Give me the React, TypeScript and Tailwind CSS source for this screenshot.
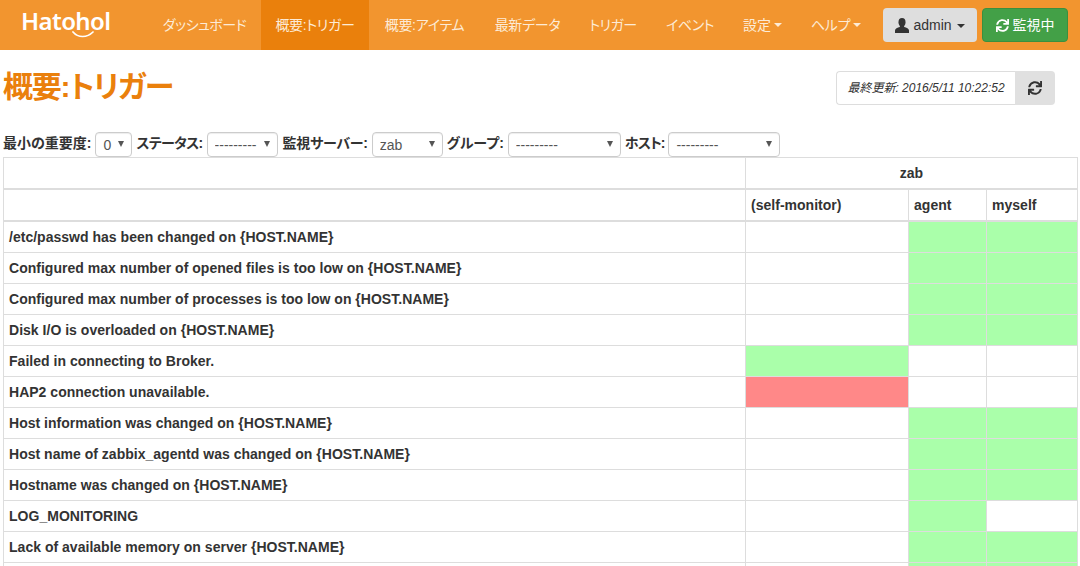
import React from "react";
import { FaSync } from "react-icons/fa";

const FONT = "font-['Liberation_Sans','Noto_Sans_CJK_JP',sans-serif] [font-feature-settings:'palt']";

const navItems = [
  { t: "ダッシュボード", w: "w-[113px] tracking-[-0.5px]" },
  { t: "概要:トリガー", w: "w-[108px] tracking-[-0.3px]" },
  { t: "概要:アイテム", w: "w-[111px] tracking-[-0.3px]" },
  { t: "最新データ", w: "w-[95px] tracking-[-0.3px]" },
  { t: "トリガー", w: "w-[76px] tracking-[-0.5px]" },
  { t: "イベント", w: "w-[78px] tracking-[-0.5px]" },
];

type Cell = "g" | "r" | "w";
const rows: [string, Cell, Cell, Cell][] = [
  ["/etc/passwd has been changed on {HOST.NAME}", "w", "g", "g"],
  ["Configured max number of opened files is too low on {HOST.NAME}", "w", "g", "g"],
  ["Configured max number of processes is too low on {HOST.NAME}", "w", "g", "g"],
  ["Disk I/O is overloaded on {HOST.NAME}", "w", "g", "g"],
  ["Failed in connecting to Broker.", "g", "w", "w"],
  ["HAP2 connection unavailable.", "r", "w", "w"],
  ["Host information was changed on {HOST.NAME}", "w", "g", "g"],
  ["Host name of zabbix_agentd was changed on {HOST.NAME}", "w", "g", "g"],
  ["Hostname was changed on {HOST.NAME}", "w", "g", "g"],
  ["LOG_MONITORING", "w", "g", "w"],
  ["Lack of available memory on server {HOST.NAME}", "w", "g", "g"],
  ["", "w", "g", "g"],
];

function cellClass(c: Cell) {
  if (c === "g") return "border border-[#ddd] bg-[#aaffaa]";
  if (c === "r") return "border border-[#ddd] bg-[#ff8888]";
  return "border border-[#ddd] bg-white";
}

function Caret() {
  return <span className="inline-block w-0 h-0 ml-[3px] align-middle border-x-[4px] border-x-transparent border-t-[4px] border-t-current" />;
}

function UserIcon() {
  return (
    <svg width="14" height="15" viewBox="0 0 14 15" className="mr-[4px]" fill="currentColor">
      <ellipse cx="7" cy="4.2" rx="3.5" ry="4.2" />
      <path d="M5 7.5 L9 7.5 L9.2 9 C 11.5 9.8, 14 10.5, 14 12.5 L14 15 L0 15 L0 12.5 C 0 10.5, 2.5 9.8, 4.8 9 Z" />
    </svg>
  );
}

function Filter({ label, value, width, labelClass }: { label: string; value: string; width: string; labelClass: string }) {
  return (
    <>
      <label className={`font-bold text-[14px] leading-[20px] mb-[4px] text-[#333] mr-[4px] whitespace-nowrap ${labelClass}`}>{label}</label>
      <span className={`relative block shrink-0 ${width} h-[25px] mr-[4px]`}>
        <select
          defaultValue={value}
          className="appearance-none block w-full h-[25px] pl-[7px] pt-[1px] text-[14px] text-[#555] bg-white border border-[#ccc] rounded-[4px] shadow-[inset_0_1px_1px_rgba(0,0,0,0.075)]"
        >
          <option value={value}>{value}</option>
        </select>
        <span className="absolute right-[8px] top-[9px] w-0 h-0 border-x-[3.5px] border-x-transparent border-t-[6px] border-t-[#555]" />
      </span>
    </>
  );
}

export default function App() {
  return (
    <div className={`${FONT} h-[566px] overflow-hidden bg-white text-[14px] text-[#333]`}>
      <nav className="h-[50px] bg-[#f2952f] flex items-stretch">
        <div className="w-[148px] shrink-0 pl-[21px] pt-[5px]">
          <div className="relative w-[90px]">
            <span className="font-['Noto_Sans',sans-serif] font-semibold text-[24px] tracking-[-0.6px] leading-[32px] text-white">Hatohol</span>
            <svg className="absolute left-[51px] top-[26px]" width="22" height="7" viewBox="0 0 22 7" fill="none">
              <path d="M1 1 C 6 7, 15 7, 21 1" stroke="#fff" strokeWidth="1.7" strokeLinecap="round" />
            </svg>
          </div>
        </div>
        {navItems.map((n, i) => (
          <a key={n.t} className={`flex items-center justify-center shrink-0 whitespace-nowrap ${n.w} text-[#fdebd6] ${i === 1 ? "bg-[#ea800c]" : ""}`}>{n.t}</a>
        ))}
        <a className="flex items-center justify-center shrink-0 whitespace-nowrap w-[67px] text-[#fdebd6]">設定<Caret /></a>
        <a className="flex items-center justify-center shrink-0 whitespace-nowrap w-[80px] mr-[1px] tracking-[-0.3px] text-[#fdebd6]">ヘルプ<Caret /></a>
        <div className="ml-auto flex items-start pt-[8px] pr-[12px] gap-[5px]">
          <button className="h-[34px] w-[94px] flex items-center justify-center rounded-[4px] bg-[#dedede] text-[#333]">
            <UserIcon />admin<span className="ml-[2px]"><Caret /></span>
          </button>
          <button className="h-[34px] w-[86px] flex items-center justify-center rounded-[4px] bg-[#43a047] border border-[#3b8f3f] text-white">
            <FaSync className="w-[13px] h-[13px] mr-[4px]" />監視中
          </button>
        </div>
      </nav>

      <div className="flex items-start justify-between pl-[3px] pr-[25px] h-[82px]">
        <h1 className="mt-[17px] text-[30px] leading-[40px] font-bold tracking-[-1.2px] text-[#ea800c]">概要:トリガー</h1>
        <div className="mt-[21px] flex h-[34px]">
          <div className="w-[179px] flex items-center justify-center border border-[#ddd] border-r-0 rounded-l-[4px] italic text-[12px]">最終更新: 2016/5/11 10:22:52</div>
          <button className="w-[40px] flex items-center justify-center bg-[#e0e0e0] rounded-r-[4px]"><FaSync className="w-[14px] h-[14px]" /></button>
        </div>
      </div>

      <div className="flex items-center h-[25px] pl-[3px]">
        <Filter label="最小の重要度:" value="0" width="w-[37px]" labelClass="" />
        <Filter label="ステータス:" value="---------" width="w-[71px] mr-[5px]" labelClass="tracking-[-0.7px]" />
        <Filter label="監視サーバー:" value="zab" width="w-[71px]" labelClass="tracking-[-0.25px]" />
        <Filter label="グループ:" value="---------" width="w-[113px]" labelClass="tracking-[0px]" />
        <Filter label="ホスト:" value="---------" width="w-[112px]" labelClass="tracking-[-1px]" />
      </div>

      <div className="pl-[3px] pr-[2px]">
        <table className="w-full table-fixed border-collapse font-bold tracking-[0.02px]">
          <colgroup>
            <col className="w-[742px]" />
            <col className="w-[163px]" />
            <col className="w-[78px]" />
            <col />
          </colgroup>
          <thead>
            <tr className="h-[31px]">
              <th className="border border-[#ddd] border-b-2"></th>
              <th colSpan={3} className="border border-[#ddd] border-b-2 pt-[2px] text-center font-bold">zab</th>
            </tr>
            <tr className="h-[32px]">
              <th className="border border-[#ddd] border-b-2"></th>
              <th className="border border-[#ddd] border-b-2 pt-[2px] text-left px-[5px] font-bold">(self-monitor)</th>
              <th className="border border-[#ddd] border-b-2 pt-[2px] text-left px-[5px] font-bold">agent</th>
              <th className="border border-[#ddd] border-b-2 pt-[2px] text-left px-[5px] font-bold">myself</th>
            </tr>
          </thead>
          <tbody>
            {rows.map(([name, a, b, c], i) => (
              <tr key={i} className={i === 0 ? "h-[32px]" : "h-[31px]"}>
                <td className={`border border-[#ddd] px-[5px] ${i === 0 ? "pt-[2px]" : ""}`}>{name}</td>
                <td className={cellClass(a)}></td>
                <td className={cellClass(b)}></td>
                <td className={cellClass(c)}></td>
              </tr>
            ))}
          </tbody>
        </table>
      </div>
    </div>
  );
}
